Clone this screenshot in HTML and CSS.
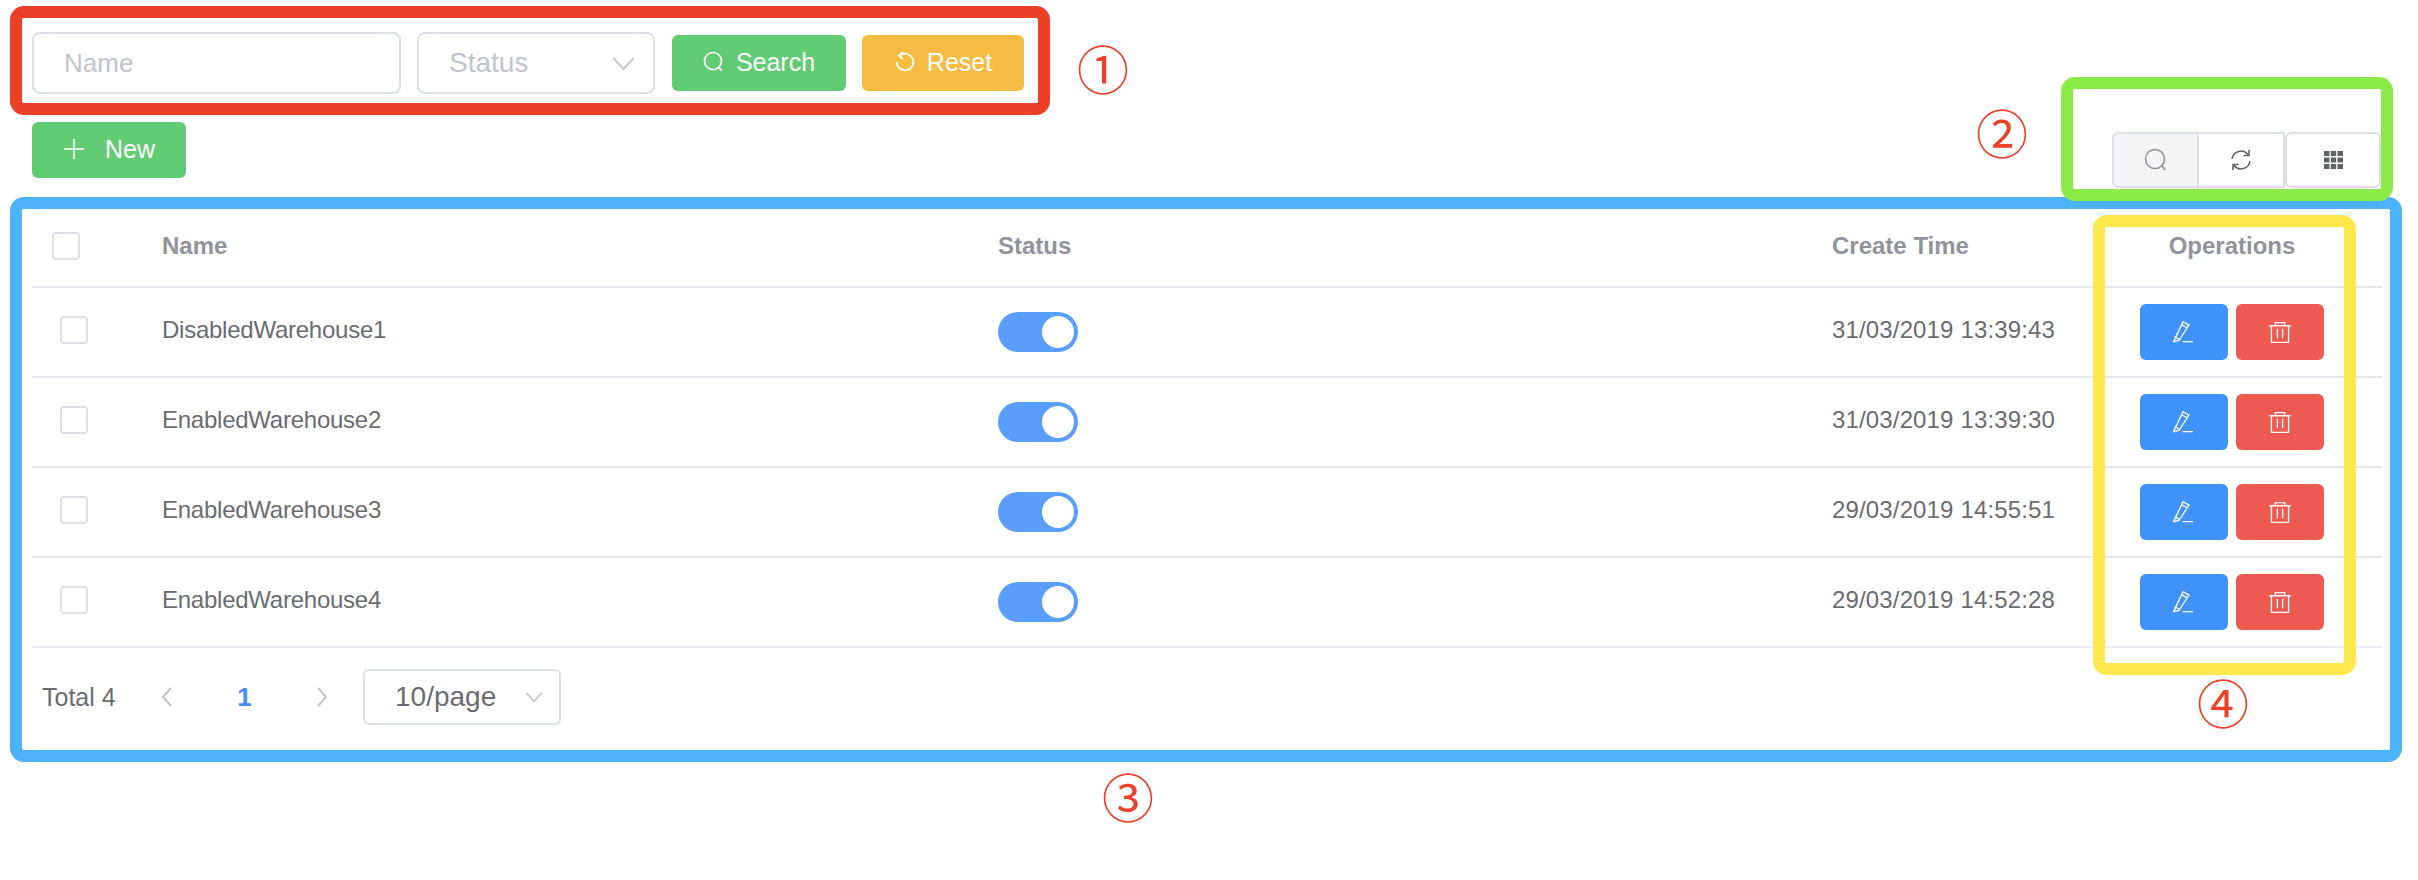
FILE: index.html

```html
<!DOCTYPE html>
<html lang="en">
<head>
    <meta charset="UTF-8">
    <title>Warehouses</title>
    <link rel="stylesheet" href="styles.css">
</head>
<body>
    <div class="page">
        <form class="search-form">
            <div class="field field-name"><span class="placeholder">Name</span></div>
            <div class="field field-status">
                <span class="placeholder">Status</span>
                <svg class="chevron" viewBox="0 0 24 14"><path d="M1 1l11 12L23 1"/></svg>
            </div>
            <button type="button" class="btn btn-green btn-search">
                <svg class="icon" viewBox="0 0 22 22"><circle cx="10" cy="10" r="8.500"/><path d="M16 16.500l3 3.500"/></svg>
                Search
            </button>
            <button type="button" class="btn btn-orange btn-reset">
                <svg class="icon" viewBox="0 0 22 22"><path d="M6 4.500A8.300 8.300 0 1 1 2.800 11"/><path d="M9 1L5 4.500 9 8"/></svg>
                Reset
            </button>
        </form>

        <div class="toolbar">
            <button type="button" class="btn btn-green btn-new">
                <svg class="icon" viewBox="0 0 24 24"><path d="M12 1v22M1 12h22"/></svg>
                New
            </button>
            <div class="tools">
                <div class="tool tool-active">
                    <svg class="tool-icon" viewBox="0 0 24 24"><circle cx="11" cy="11" r="9.500"/><path d="M18 18l3.500 4"/></svg>
                </div>
                <div class="tool tool-middle">
                    <svg class="tool-icon tool-icon-dark" viewBox="0 0 24 24"><path d="M3 11A9 9 0 0 1 19 6.500"/><path d="M20 2v5.500h-5.500"/><path d="M21 13A9 9 0 0 1 5 17.500"/><path d="M4 22v-5.500h5.500"/></svg>
                </div>
                <div class="tool tool-last">
                    <svg class="tool-grid" viewBox="0 0 19 18"><path d="M0 0h5.500v5H0zM6.800 0h5.400v5H6.800zM13.500 0H19v5h-5.500zM0 6.500h5.500v5H0zM6.800 6.500h5.400v5H6.800zM13.500 6.500H19v5h-5.500zM0 13h5.500v5H0zM6.800 13h5.400v5H6.800zM13.500 13H19v5h-5.500z"/></svg>
                </div>
            </div>
        </div>

        <table class="grid">
            <colgroup>
                <col class="col-check"><col class="col-name"><col class="col-status"><col class="col-time"><col class="col-ops">
            </colgroup>
            <thead>
                <tr>
                    <th class="cell-head-check"><span class="checkbox"></span></th>
                    <th>Name</th>
                    <th>Status</th>
                    <th>Create Time</th>
                    <th class="cell-ops">Operations</th>
                </tr>
            </thead>
            <tbody>
                <tr>
                    <td class="cell-check"><span class="checkbox"></span></td>
                    <td><span class="text text-name">DisabledWarehouse1</span></td>
                    <td><span class="switch"></span></td>
                    <td><span class="text text-time">31/03/2019 13:39:43</span></td>
                    <td class="cell-ops">
                        <div class="ops">
                            <button type="button" class="op op-edit"><svg class="op-icon" viewBox="0 0 22 22"><path d="M.6 20.600L10 .8l6 3.300-10 15.400zM8.500 3.600l6 3.400M1.600 15.500l5.400 3.200M9.500 20.700H20"/></svg></button>
                            <button type="button" class="op op-delete"><svg class="op-icon" viewBox="0 0 21 21"><path d="M.3 4.500h20.400M6 4.500v-3h9v3M2.300 4.500v16h16.400v-16M8 7.500v9M13 7.500v9"/></svg></button>
                        </div>
                    </td>
                </tr>
                <tr>
                    <td class="cell-check"><span class="checkbox"></span></td>
                    <td><span class="text text-name">EnabledWarehouse2</span></td>
                    <td><span class="switch"></span></td>
                    <td><span class="text text-time">31/03/2019 13:39:30</span></td>
                    <td class="cell-ops">
                        <div class="ops">
                            <button type="button" class="op op-edit"><svg class="op-icon" viewBox="0 0 22 22"><path d="M.6 20.600L10 .8l6 3.300-10 15.400zM8.500 3.600l6 3.400M1.600 15.500l5.400 3.200M9.500 20.700H20"/></svg></button>
                            <button type="button" class="op op-delete"><svg class="op-icon" viewBox="0 0 21 21"><path d="M.3 4.500h20.400M6 4.500v-3h9v3M2.300 4.500v16h16.400v-16M8 7.500v9M13 7.500v9"/></svg></button>
                        </div>
                    </td>
                </tr>
                <tr>
                    <td class="cell-check"><span class="checkbox"></span></td>
                    <td><span class="text text-name">EnabledWarehouse3</span></td>
                    <td><span class="switch"></span></td>
                    <td><span class="text text-time">29/03/2019 14:55:51</span></td>
                    <td class="cell-ops">
                        <div class="ops">
                            <button type="button" class="op op-edit"><svg class="op-icon" viewBox="0 0 22 22"><path d="M.6 20.600L10 .8l6 3.300-10 15.400zM8.500 3.600l6 3.400M1.600 15.500l5.400 3.200M9.500 20.700H20"/></svg></button>
                            <button type="button" class="op op-delete"><svg class="op-icon" viewBox="0 0 21 21"><path d="M.3 4.500h20.400M6 4.500v-3h9v3M2.300 4.500v16h16.400v-16M8 7.500v9M13 7.500v9"/></svg></button>
                        </div>
                    </td>
                </tr>
                <tr class="row-last">
                    <td class="cell-check"><span class="checkbox"></span></td>
                    <td><span class="text text-name">EnabledWarehouse4</span></td>
                    <td><span class="switch"></span></td>
                    <td><span class="text text-time">29/03/2019 14:52:28</span></td>
                    <td class="cell-ops">
                        <div class="ops">
                            <button type="button" class="op op-edit"><svg class="op-icon" viewBox="0 0 22 22"><path d="M.6 20.600L10 .8l6 3.300-10 15.400zM8.500 3.600l6 3.400M1.600 15.500l5.400 3.200M9.500 20.700H20"/></svg></button>
                            <button type="button" class="op op-delete"><svg class="op-icon" viewBox="0 0 21 21"><path d="M.3 4.500h20.400M6 4.500v-3h9v3M2.300 4.500v16h16.400v-16M8 7.500v9M13 7.500v9"/></svg></button>
                        </div>
                    </td>
                </tr>
            </tbody>
        </table>

        <div class="pager">
            <span class="total">Total 4</span>
            <svg class="pager-arrow pager-prev" viewBox="0 0 12 20"><path d="M10 1L2 10l8 9"/></svg>
            <span class="pager-num">1</span>
            <svg class="pager-arrow pager-next" viewBox="0 0 12 20"><path d="M2 1l8 9-8 9"/></svg>
            <div class="size-select">
                <span>10/page</span>
                <svg class="chevron chevron-small" viewBox="0 0 24 14"><path d="M1 1l11 12L23 1"/></svg>
            </div>
        </div>

        <div class="mark mark-blue"></div>
        <div class="mark mark-yellow"></div>
        <div class="mark mark-red"></div>
        <div class="mark mark-green"></div>
        <span class="num num-1">①</span>
        <span class="num num-2">②</span>
        <span class="num num-3">③</span>
        <span class="num num-4">④</span>
    </div>
</body>
</html>
```

FILE: styles.css

```css
* {
    box-sizing: border-box;
}
body {
    margin: 0;
    background: #fff;
    color: #6a6c70;
    font-family: "Liberation Sans", Arial, sans-serif;
    font-size: 24px;
}
.page {
    position: relative;
    width: 2418px;
    height: 880px;
    padding: 32px 36px 0 32px;
    overflow: hidden;
}
svg {
    fill: none;
    stroke: currentColor;
    display: block;
}

/* search form */
.search-form {
    display: flex;
    align-items: center;
    height: 62px;
}
.field {
    display: flex;
    align-items: center;
    height: 62px;
    padding: 0 18px 0 30px;
    border: 2px solid #dcdfe6;
    border-radius: 8px;
    font-size: 28px;
}
.field-name {
    width: 369px;
    margin-right: 16px;
    font-size: 26px;
}
.field-status {
    width: 238px;
    margin-right: 17px;
    justify-content: space-between;
}
.placeholder {
    color: #c0c4cc;
}
.chevron {
    width: 23px;
    height: 13px;
    color: #c0c4cc;
    stroke-width: 2;
}
.chevron-small {
    width: 18px;
    height: 10px;
    stroke-width: 2.2;
}
.btn {
    display: flex;
    align-items: center;
    justify-content: center;
    height: 56px;
    padding: 0 0 2px;
    border: none;
    border-radius: 6px;
    color: #fff;
    font-family: inherit;
    font-size: 25px;
}
.btn-green {
    background: #61cc73;
}
.btn-orange {
    background: #f6bc42;
}
.btn-search {
    width: 174px;
    margin-right: 16px;
}
.btn-reset {
    width: 162px;
}
.btn-new {
    width: 154px;
}
.icon {
    width: 22px;
    height: 22px;
    margin-right: 11px;
    stroke-width: 1.7;
}
.btn-new .icon {
    margin-right: 20px;
}

/* toolbar */
.toolbar {
    display: flex;
    justify-content: space-between;
    height: 66px;
    margin-top: 28px;
}
.tools {
    display: flex;
    align-self: flex-end;
    width: 269px;
    height: 56px;
    margin-right: 1px;
}
.tool {
    display: flex;
    align-items: center;
    justify-content: center;
    width: 87px;
    border: 2px solid #dcdfe6;
    border-left: none;
}
.tool-active {
    background: #f4f4f4;
    border-left: 2px solid #dcdfe6;
    border-radius: 6px 0 0 6px;
}
.tool-middle {
    width: 86px;
}
.tool-last {
    width: 96px;
    border-left: 2px solid #dcdfe6;
    border-radius: 6px;
}
.tool-icon {
    width: 24px;
    height: 24px;
    color: #909399;
    stroke-width: 1.6;
}
.tool-icon-dark {
    color: #606266;
}
.tool-grid {
    width: 19px;
    height: 18px;
    fill: #606266;
    stroke: none;
}

/* table */
.grid {
    width: 2350px;
    margin-top: 9px;
    border-collapse: collapse;
    table-layout: fixed;
    white-space: nowrap;
}
.col-check {
    width: 110px;
}
.col-name {
    width: 836px;
}
.col-status {
    width: 834px;
}
.col-time {
    width: 270px;
}
.col-ops {
    width: 300px;
}
.grid tr {
    height: 90px;
    border-bottom: 2px solid #e3e7ec;
}
.grid .row-last {
    border-bottom-color: #e9ecf6;
}
.grid th {
    padding: 8px 20px 0;
    color: #909399;
    font-size: 24px;
    font-weight: bold;
    text-align: left;
}
.grid td {
    padding: 0 20px;
}
.grid th.cell-ops {
    text-align: center;
}
.grid td.cell-check {
    padding-left: 28px;
    padding-bottom: 4px;
}
.text {
    position: relative;
    top: -2px;
}
.text-name {
    letter-spacing: -0.25px;
}
.text-time {
    letter-spacing: 0.15px;
}
.checkbox {
    display: block;
    width: 28px;
    height: 28px;
    border: 2px solid #dcdfe6;
    border-radius: 4px;
    background: #fff;
}
.switch {
    position: relative;
    display: block;
    width: 80px;
    height: 40px;
    border-radius: 20px;
    background: #5a9efb;
}
.switch::after {
    content: "";
    position: absolute;
    top: 4px;
    right: 4px;
    width: 32px;
    height: 32px;
    border-radius: 50%;
    background: #fff;
}
.ops {
    display: flex;
    justify-content: center;
    gap: 8px;
}
.op {
    display: flex;
    align-items: center;
    justify-content: center;
    width: 88px;
    height: 56px;
    padding: 0;
    border: none;
    border-radius: 6px;
    color: #fff;
}
.op-edit {
    background: #4092f8;
}
.op-delete {
    background: #ee5a52;
}
.op-icon {
    width: 22px;
    height: 22px;
    stroke-width: 1.3;
}

/* pagination */
.pager {
    display: flex;
    align-items: center;
    height: 56px;
    margin-top: 21px;
    padding-left: 10px;
}
.total {
    width: 76px;
    margin-right: 43px;
    font-size: 25px;
    white-space: nowrap;
}
.pager-arrow {
    width: 12px;
    height: 20px;
    color: #c0c4cc;
    stroke-width: 2;
}
.pager-num {
    width: 143px;
    color: #3f8ff7;
    font-weight: bold;
    font-size: 26px;
    text-align: center;
}
.pager-next {
    margin-right: 35px;
}
.size-select {
    display: flex;
    align-items: center;
    justify-content: space-between;
    width: 198px;
    height: 56px;
    padding: 0 16px 0 30px;
    border: 2px solid #dcdfe6;
    border-radius: 6px;
    font-size: 28px;
}

/* annotations */
.mark {
    position: absolute;
    border: 12px solid;
    border-radius: 14px;
}
.mark-red {
    left: 10px;
    top: 6px;
    width: 1040px;
    height: 109px;
    border-color: #ee4026;
}
.mark-green {
    left: 2061px;
    top: 77px;
    width: 332px;
    height: 124px;
    border-color: #8aea48;
}
.mark-blue {
    left: 10px;
    top: 197px;
    width: 2392px;
    height: 565px;
    border-color: #4cb2fa;
}
.mark-yellow {
    left: 2093px;
    top: 215px;
    width: 263px;
    height: 460px;
    border-color: #ffe84d;
}
.num {
    position: absolute;
    color: #ee4026;
    font-family: "Noto Sans CJK SC", sans-serif;
    font-size: 52px;
    line-height: 60px;
}
.num-1 {
    left: 1077px;
    top: 38px;
}
.num-2 {
    left: 1976px;
    top: 102px;
}
.num-3 {
    left: 1102px;
    top: 766px;
}
.num-4 {
    left: 2197px;
    top: 672px;
}
```
